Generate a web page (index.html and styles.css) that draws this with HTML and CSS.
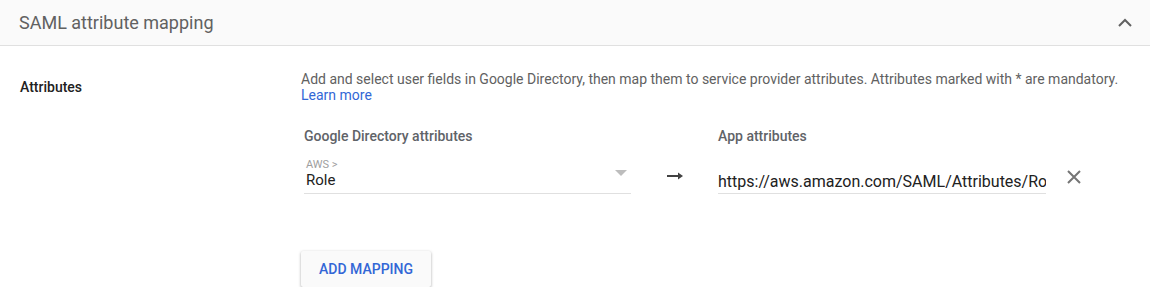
FILE: index.html
```html
<!DOCTYPE html>
<html>
<head>
    <title>SAML attribute mapping</title>
    <link rel="stylesheet" href="styles.css">
</head>
<body>
    <div class="panel">
        <div class="panel-header">
            <span class="panel-title">SAML attribute mapping</span>
            <svg class="chevron" width="14" height="9" viewBox="0 0 14 9">
                <path d="M1 8l6-6 6 6" fill="none" stroke="#616161" stroke-width="2"/>
            </svg>
        </div>

        <div class="section">
            <div class="section-label">Attributes</div>
            <div class="section-body">
                <p class="description">
                    Add and select user fields in Google Directory, then map them to service provider attributes. Attributes marked with * are mandatory.<br>
                    <a href="#" class="link">Learn more</a>
                </p>

                <div class="mapping">
                    <div class="mapping-head">
                        <div class="col-src">Google Directory attributes</div>
                        <div class="col-arrow"></div>
                        <div class="col-dst">App attributes</div>
                    </div>
                    <div class="mapping-row">
                        <div class="col-src select-field">
                            <div class="select-text">
                                <span class="select-group">AWS &gt;</span>
                                <span class="select-value">Role</span>
                            </div>
                            <span class="select-caret"></span>
                        </div>
                        <div class="col-arrow">
                            <svg width="16" height="8" viewBox="0 0 16 8">
                                <path d="M0 4h12" stroke="#424242" stroke-width="2"/>
                                <path d="M11 0.5L16 4 11 7.5z" fill="#424242"/>
                            </svg>
                        </div>
                        <input class="col-dst text-field" type="text" value="https://aws.amazon.com/SAML/Attributes/Role">
                        <button class="remove-btn" title="Remove">
                            <svg width="16" height="16" viewBox="0 0 16 16">
                                <path d="M2 2l12 12M14 2L2 14" stroke="#757575" stroke-width="2"/>
                            </svg>
                        </button>
                    </div>
                </div>

                <button class="add-btn">ADD MAPPING</button>
            </div>
        </div>
    </div>
</body>
</html>
```

FILE: styles.css
```css
body {
    margin: 0;
    font-family: Roboto, "Liberation Sans", Arial, sans-serif;
    color: #212121;
    background: #fff;
}
.panel-header {
    height: 45px;
    background: #fafafa;
    border-bottom: 1px solid #e0e0e0;
    display: flex;
    align-items: center;
    justify-content: space-between;
    padding: 0 18px 0 19px;
}
.panel-title {
    font-size: 18px;
    color: #616161;
}
.chevron {
    display: block;
}
.section {
    display: flex;
    padding: 25px 20px 0 20px;
}
.section-label {
    width: 281px;
    flex-shrink: 0;
    font-size: 14px;
    font-weight: 500;
    line-height: 16px;
    margin-top: 8px;
    color: #212121;
}
.section-body {
    flex: 1;
}
.description {
    margin: 0;
    font-size: 14px;
    line-height: 16px;
    color: #616161;
}
.link {
    color: #3367d6;
    text-decoration: none;
}
.mapping {
    margin: 25px 0 0 3px;
}
.mapping-head,
.mapping-row {
    display: flex;
    align-items: center;
}
.mapping-head {
    font-size: 14px;
    font-weight: 500;
    line-height: 16px;
    color: #5f6368;
}
.mapping-row {
    margin-top: 13px;
}
.col-src {
    width: 327px;
}
.col-arrow {
    width: 87px;
    display: flex;
    justify-content: center;
    padding-top: 1px;
}
.col-dst {
    width: 328px;
}
.select-field {
    display: flex;
    align-items: center;
    justify-content: space-between;
    border-bottom: 1px solid #e0e0e0;
    height: 37px;
    box-sizing: border-box;
    padding: 0 4px 3px 2px;
}
.select-text {
    display: flex;
    flex-direction: column;
}
.select-group {
    font-size: 11px;
    line-height: 13px;
    color: #9e9e9e;
}
.select-value {
    font-size: 15px;
    line-height: 18px;
    color: #212121;
}
.select-caret {
    width: 0;
    height: 0;
    border-left: 6px solid transparent;
    border-right: 6px solid transparent;
    border-top: 6px solid #bdbdbd;
    margin-bottom: 2px;
}
.text-field {
    box-sizing: border-box;
    height: 37px;
    font-family: inherit;
    font-size: 16px;
    color: #212121;
    padding: 14px 0 2px 0;
    border: none;
    border-bottom: 1px solid #e0e0e0;
    outline: none;
    background: transparent;
}
.remove-btn {
    background: none;
    border: none;
    padding: 0;
    margin-left: 20px;
    margin-top: 2px;
    cursor: pointer;
    display: flex;
}
.add-btn {
    margin-top: 57px;
    width: 130px;
    height: 36px;
    background: #fafafa;
    color: #3367d6;
    border: none;
    border-radius: 2px;
    font-family: inherit;
    font-size: 14px;
    font-weight: 500;
    box-shadow: 0 1px 3px rgba(0, 0, 0, 0.35);
    cursor: pointer;
}
```
